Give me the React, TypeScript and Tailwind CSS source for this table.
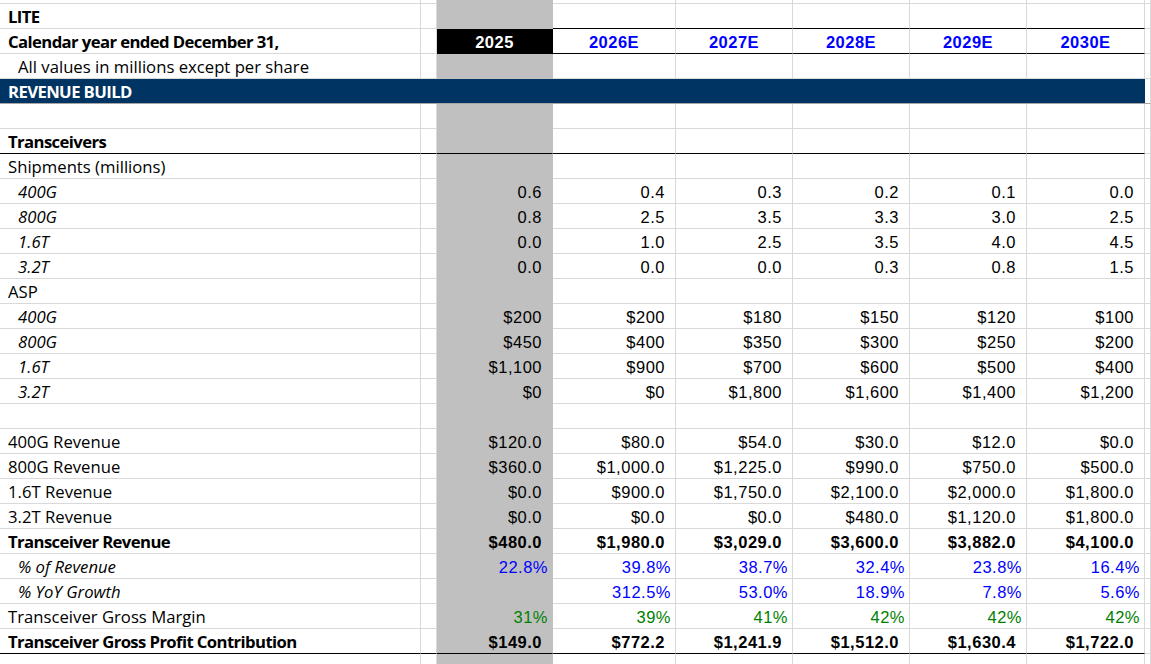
import React from 'react';

const COLS =
  'grid grid-cols-[421px_16px_116px_123px_117px_117px_117px_118px_1fr] grid-rows-[25px] overflow-hidden';
const LABEL_FONT = "font-['Open_Sans',sans-serif] text-[16.7px] leading-[20px]";
const BOLD_LABEL = 'font-bold tracking-[-0.6px]';
const NUM_FONT =
  "font-['Liberation_Sans',Arial,sans-serif] text-[16.5px] leading-[20px] tracking-[0.5px]";
const GRID = 'border-r border-b border-[#d9d9d9]';

type RowProps = {
  label?: string;
  labelCls?: string;
  values?: string[];
  valCls?: string;
  pct?: boolean;
  line?: boolean;
};

function Row({
  label = '',
  labelCls = '',
  values = [],
  valCls = '',
  pct = false,
  line = false,
}: RowProps) {
  const bottom = line ? 'border-b-black' : '';
  const pad = pct ? 'pr-[4px]' : 'pr-[10px]';
  const vals = [0, 1, 2, 3, 4, 5].map((i) => values[i] ?? '');

  return (
    <div className={`${COLS} h-[25px]`}>
      <div
        className={`${GRID} ${bottom} ${LABEL_FONT} flex items-center whitespace-nowrap pt-[2px] text-black ${labelCls}`}
      >
        {label}
      </div>
      <div className={`${GRID} ${bottom}`} />
      <div
        className={`border-r border-b border-[#c0c0c0] bg-[#c0c0c0] ${bottom} ${NUM_FONT} ${pad} flex items-center justify-end pt-[2px] ${valCls}`}
      >
        {vals[0]}
      </div>
      {vals.slice(1).map((v, i) => (
        <div
          key={i}
          className={`${GRID} ${bottom} ${NUM_FONT} ${pad} flex items-center justify-end pt-[2px] ${valCls}`}
        >
          {v}
        </div>
      ))}
      <div className={GRID} />
    </div>
  );
}

const years = ['2026E', '2027E', '2028E', '2029E', '2030E'];

export default function App() {
  return (
    <div className="h-[664px] w-[1151px] overflow-hidden bg-white">
      {/* partial row above */}
      <div className="grid h-[4px] grid-cols-[421px_16px_116px_123px_117px_117px_117px_118px_1fr]">
        <div className={GRID} />
        <div className={GRID} />
        <div className="border-r border-b border-[#c0c0c0] bg-[#c0c0c0]" />
        {years.map((y) => (
          <div key={y} className={GRID} />
        ))}
        <div className={GRID} />
      </div>

      {/* LITE */}
      <div className={`${COLS} h-[25px]`}>
        <div className={`${GRID} ${LABEL_FONT} ${BOLD_LABEL} flex items-center pt-[2px] pl-2`}>
          LITE
        </div>
        <div className={GRID} />
        <div className="border-r border-b border-[#c0c0c0] bg-[#c0c0c0]" />
        {years.map((y) => (
          <div key={y} className={`${GRID} border-b-black`} />
        ))}
        <div className={GRID} />
      </div>

      {/* Calendar year header */}
      <div className={`${COLS} h-[25px]`}>
        <div
          className={`${GRID} ${LABEL_FONT} ${BOLD_LABEL} flex items-center whitespace-nowrap pt-[2px] pl-2`}
        >
          Calendar year ended December 31,
        </div>
        <div className={GRID} />
        <div
          className={`border-r border-b border-black bg-black ${NUM_FONT} flex items-center justify-center pt-[2px] font-bold text-white`}
        >
          2025
        </div>
        {years.map((y) => (
          <div
            key={y}
            className={`${GRID} border-b-black ${NUM_FONT} flex items-center justify-center pt-[2px] font-bold text-[#0000ff]`}
          >
            {y}
          </div>
        ))}
        <div className={GRID} />
      </div>

      <Row label="All values in millions except per share" labelCls="pl-[18px]" />

      {/* section bar */}
      <div className={`${COLS} h-[25px]`}>
        <div className="col-span-8 flex items-center border-b border-[#a6a6a6] bg-[#003462] pt-[2px] pl-2">
          <span className={`${LABEL_FONT} ${BOLD_LABEL} text-white`}>
            REVENUE BUILD
          </span>
        </div>
        <div className={`${GRID} border-b-[#a6a6a6]`} />
      </div>

      <Row />
      <Row label="Transceivers" labelCls={`pl-2 ${BOLD_LABEL}`} line />
      <Row label="Shipments (millions)" labelCls="pl-2" />
      <Row label="400G" labelCls="pl-[18px] italic" values={['0.6', '0.4', '0.3', '0.2', '0.1', '0.0']} />
      <Row label="800G" labelCls="pl-[18px] italic" values={['0.8', '2.5', '3.5', '3.3', '3.0', '2.5']} />
      <Row label="1.6T" labelCls="pl-[18px] italic" values={['0.0', '1.0', '2.5', '3.5', '4.0', '4.5']} />
      <Row label="3.2T" labelCls="pl-[18px] italic" values={['0.0', '0.0', '0.0', '0.3', '0.8', '1.5']} />
      <Row label="ASP" labelCls="pl-2" />
      <Row label="400G" labelCls="pl-[18px] italic" values={['$200', '$200', '$180', '$150', '$120', '$100']} />
      <Row label="800G" labelCls="pl-[18px] italic" values={['$450', '$400', '$350', '$300', '$250', '$200']} />
      <Row label="1.6T" labelCls="pl-[18px] italic" values={['$1,100', '$900', '$700', '$600', '$500', '$400']} />
      <Row label="3.2T" labelCls="pl-[18px] italic" values={['$0', '$0', '$1,800', '$1,600', '$1,400', '$1,200']} />
      <Row />
      <Row label="400G Revenue" labelCls="pl-2" values={['$120.0', '$80.0', '$54.0', '$30.0', '$12.0', '$0.0']} />
      <Row label="800G Revenue" labelCls="pl-2" values={['$360.0', '$1,000.0', '$1,225.0', '$990.0', '$750.0', '$500.0']} />
      <Row label="1.6T Revenue" labelCls="pl-2" values={['$0.0', '$900.0', '$1,750.0', '$2,100.0', '$2,000.0', '$1,800.0']} />
      <Row label="3.2T Revenue" labelCls="pl-2" values={['$0.0', '$0.0', '$0.0', '$480.0', '$1,120.0', '$1,800.0']} />
      <Row
        label="Transceiver Revenue"
        labelCls={`pl-2 ${BOLD_LABEL}`}
        valCls="font-bold"
        values={['$480.0', '$1,980.0', '$3,029.0', '$3,600.0', '$3,882.0', '$4,100.0']}
      />
      <Row
        label="% of Revenue"
        labelCls="pl-[18px] italic"
        valCls="text-[#0000ff]"
        pct
        values={['22.8%', '39.8%', '38.7%', '32.4%', '23.8%', '16.4%']}
      />
      <Row
        label="% YoY Growth"
        labelCls="pl-[18px] italic"
        valCls="text-[#0000ff]"
        pct
        values={['', '312.5%', '53.0%', '18.9%', '7.8%', '5.6%']}
      />
      <Row
        label="Transceiver Gross Margin"
        labelCls="pl-2"
        valCls="text-[#008000]"
        pct
        values={['31%', '39%', '41%', '42%', '42%', '42%']}
      />
      <Row
        label="Transceiver Gross Profit Contribution"
        labelCls={`pl-2 ${BOLD_LABEL}`}
        valCls="font-bold"
        line
        values={['$149.0', '$772.2', '$1,241.9', '$1,512.0', '$1,630.4', '$1,722.0']}
      />
      <Row />
    </div>
  );
}
